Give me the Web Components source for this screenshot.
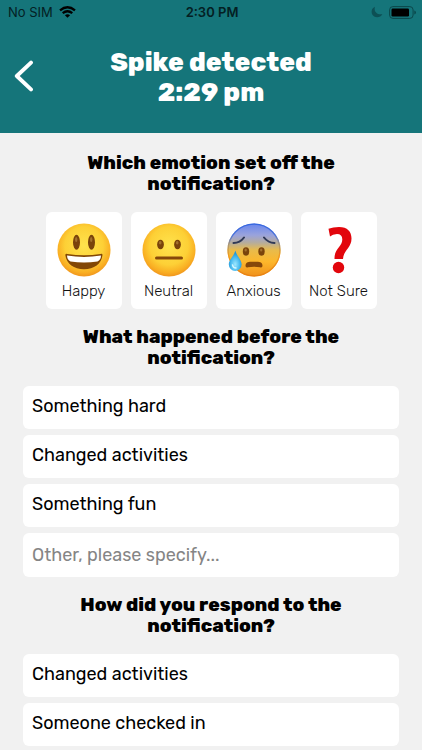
<!DOCTYPE html>
<html lang="en">
<head>
<meta charset="utf-8">
<meta name="viewport" content="width=device-width, initial-scale=1">
<title>Spike detected</title>
<style>
    body {
        margin: 0;
        background: #f1f1f1;
        color: #000;
        font-family: Rubik, Inter, "Liberation Sans", sans-serif;
    }
    main {
        padding: 19px 23px 4px;
    }
</style>
</head>
<body>

<template id="status-bar">
    <style>
        :host {
            display: grid;
            grid-template-columns: 1fr auto 1fr;
            align-items: center;
            height: 24px;
            padding: 0 6px 0 8px;
            background: #15757a;
            font-family: Inter, "Liberation Sans", sans-serif;
            font-size: 13px;
            line-height: 16px;
            color: #042023;
        }
        .left, .right {
            display: flex;
            align-items: center;
            gap: 6px;
        }
        .right {
            justify-content: flex-end;
        }
        .time {
            font-weight: 600;
        }
        svg {
            display: block;
        }
    </style>
    <div class="left">
        <slot name="carrier"></slot>
        <svg width="17" height="12" viewBox="0 0 17 12" fill="none" stroke="#000" stroke-width="2.3">
            <path d="M1 4.3 Q8.5 -1.9 16 4.3"/>
            <path d="M3.7 7.1 Q8.5 3.3 13.3 7.1"/>
            <path d="M8.5 11.8 L5.9 9.2 Q8.5 7.2 11.1 9.2 Z" fill="#000" stroke="none"/>
        </svg>
    </div>
    <div class="time"><slot></slot></div>
    <div class="right">
        <svg width="12" height="12" viewBox="0 0 12 12">
            <path d="M4 .8 C-.5 2.6 -.3 8.6 3.2 10.6 C6.300 12.300 10.200 10.900 11.300 8 C6.600 9.200 2.400 5.800 4 .8 Z" fill="#0d5055"/>
        </svg>
        <svg width="27" height="13" viewBox="0 0 27 13">
            <rect x=".6" y=".6" width="23.5" height="11.8" rx="3.3" fill="none" stroke="#0b474b"/>
            <rect x="2.5" y="2.5" width="17.5" height="8" rx="1.2" fill="#000"/>
            <path d="M25.3 4.5 Q27 5.2 27 6.5 Q27 7.8 25.3 8.5 Z" fill="#0b474b"/>
        </svg>
    </div>
</template>

<template id="page-header">
    <style>
        :host {
            display: grid;
            grid-template-columns: 48px 1fr 48px;
            align-items: center;
            padding: 24px 0 25px;
            background: #15757a;
            color: #fff;
        }
        button {
            display: flex;
            justify-content: center;
            align-items: center;
            height: 60px;
            padding: 0 0 4px;
            border: 0;
            background: none;
            color: inherit;
            cursor: pointer;
        }
        h1 {
            margin: 0;
            font-size: 26px;
            line-height: 30px;
            font-weight: 800;
            text-align: center;
        }
    </style>
    <button type="button" aria-label="Back">
        <svg width="20" height="32" viewBox="0 0 20 32" fill="none" stroke="currentColor" stroke-width="3.9" stroke-linecap="round" stroke-linejoin="round">
            <path d="M17 2.6 L2.8 16 L17 29.4"/>
        </svg>
    </button>
    <h1><slot></slot></h1>
</template>

<template id="question-block">
    <style>
        :host {
            display: block;
            margin-bottom: 17px;
        }
        h2 {
            margin: 0 32px 18px;
            font-size: 19px;
            line-height: 21px;
            font-weight: 800;
            text-align: center;
        }
        .answers {
            display: flex;
            flex-direction: column;
            gap: 6px;
        }
        :host([row]) .answers {
            flex-direction: row;
            justify-content: center;
            gap: 9px;
        }
    </style>
    <h2><slot name="title"></slot></h2>
    <div class="answers"><slot></slot></div>
</template>

<template id="emotion-card">
    <style>
        :host {
            display: block;
            flex: 0 1 76px;
        }
        button {
            display: flex;
            flex-direction: column;
            align-items: center;
            gap: 4px;
            width: 100%;
            height: 97px;
            padding: 11px 0 0;
            border: 0;
            border-radius: 6px;
            background: #fff;
            color: #111;
            font: inherit;
            font-size: 15px;
            line-height: 20px;
            font-weight: 300;
            white-space: nowrap;
            cursor: pointer;
        }
    </style>
    <button type="button">
        <slot name="icon"></slot>
        <span><slot></slot></span>
    </button>
</template>

<template id="answer-option">
    <style>
        :host {
            display: block;
        }
        button {
            display: block;
            width: 100%;
            padding: 9px 9px 12px;
            border: 0;
            border-radius: 6px;
            background: #fff;
            color: inherit;
            font: inherit;
            font-size: 18px;
            line-height: 22px;
            text-align: left;
            cursor: pointer;
        }
    </style>
    <button type="button"><slot></slot></button>
</template>

<template id="answer-input">
    <style>
        :host {
            display: block;
        }
        input {
            display: block;
            box-sizing: border-box;
            width: 100%;
            height: 44px;
            padding: 0 9px;
            border: 0;
            border-radius: 6px;
            background: #fff;
            color: inherit;
            font: inherit;
            font-size: 18px;
        }
        input::placeholder {
            color: #858585;
            opacity: 1;
        }
    </style>
    <input type="text">
</template>

<status-bar><span slot="carrier">No SIM</span>2:30 PM</status-bar>
<page-header>Spike detected<br>2:29 pm</page-header>

<main>
    <question-block row>
        <span slot="title">Which emotion set off the notification?</span>
        <emotion-card>
            <svg slot="icon" width="54" height="54" viewBox="0 0 54 54">
                <defs>
                    <radialGradient id="face" cx=".5" cy=".42" r=".6">
                        <stop offset="0" stop-color="#ffe34d"/>
                        <stop offset=".6" stop-color="#fdd036"/>
                        <stop offset=".85" stop-color="#f9ad22"/>
                        <stop offset="1" stop-color="#ee8f1c"/>
                    </radialGradient>
                </defs>
                <circle cx="27" cy="27" r="26.5" fill="url(#face)"/>
                <ellipse cx="19.5" cy="19.2" rx="3.5" ry="7.5" fill="#7a430b"/>
                <ellipse cx="34.5" cy="19.2" rx="3.5" ry="7.5" fill="#7a430b"/>
                <ellipse cx="19.2" cy="16.5" rx="1.2" ry="2.5" fill="#a2702f"/>
                <ellipse cx="34.2" cy="16.5" rx="1.2" ry="2.5" fill="#a2702f"/>
                <path d="M8.3 32 Q8.5 30.4 10.5 31 Q27 33.5 43.5 31 Q45.5 30.4 45.5 32 C44.5 41 37 46.2 27 46.2 C17 46.2 9.5 41 8.3 32 Z" fill="#824706"/>
                <path d="M10 32.6 Q27 35.4 44 32.6 Q43.8 37.4 40.5 38.4 Q27 40.4 13.5 38.4 Q10.3 37.4 10 32.6 Z" fill="#fff"/>
            </svg>
            Happy
        </emotion-card>
        <emotion-card>
            <svg slot="icon" width="54" height="54" viewBox="0 0 54 54">
                <circle cx="27" cy="27" r="26.5" fill="url(#face)"/>
                <ellipse cx="18.5" cy="21.5" rx="3.4" ry="4.8" fill="#7a430b"/>
                <ellipse cx="35.5" cy="21.5" rx="3.4" ry="4.8" fill="#7a430b"/>
                <ellipse cx="18.2" cy="19.8" rx="1.3" ry="1.7" fill="#a2702f"/>
                <ellipse cx="35.2" cy="19.8" rx="1.3" ry="1.7" fill="#a2702f"/>
                <rect x="13" y="33.5" width="28" height="3" rx="1.5" fill="#86480a"/>
            </svg>
            Neutral
        </emotion-card>
        <emotion-card>
            <svg slot="icon" width="54" height="54" viewBox="0 0 54 54">
                <defs>
                    <linearGradient id="cold" x1="0" y1="0" x2="0" y2="1">
                        <stop offset="0" stop-color="#6886ee"/>
                        <stop offset=".22" stop-color="#9aa3dc"/>
                        <stop offset=".36" stop-color="#b5ac9e"/>
                        <stop offset=".5" stop-color="#e8bb4c"/>
                        <stop offset=".72" stop-color="#fdb72b"/>
                        <stop offset="1" stop-color="#ef901c"/>
                    </linearGradient>
                    <linearGradient id="rim" x1="0" y1="0" x2="0" y2="1">
                        <stop offset="0" stop-color="#3667df"/>
                        <stop offset=".22" stop-color="#4c75da"/>
                        <stop offset=".42" stop-color="#b59a68"/>
                        <stop offset=".6" stop-color="#ef9a22"/>
                        <stop offset="1" stop-color="#e98212"/>
                    </linearGradient>
                    <radialGradient id="drop" cx=".5" cy=".68" r=".55">
                        <stop offset="0" stop-color="#9ce7ff"/>
                        <stop offset=".6" stop-color="#4dbdf0"/>
                        <stop offset="1" stop-color="#2196d8"/>
                    </radialGradient>
                </defs>
                <circle cx="27" cy="27" r="26.5" fill="url(#cold)"/>
                <circle cx="27" cy="27" r="25.9" fill="none" stroke="url(#rim)" stroke-width="1.3"/>
                <path d="M6.5 20 Q13 20 17 14.500 M37 14.500 Q41 19.800 47.500 20" fill="none" stroke="#303956" stroke-width="2" stroke-linecap="round"/>
                <ellipse cx="19" cy="28.5" rx="3.2" ry="4.2" fill="#7a430b"/>
                <ellipse cx="34.5" cy="28.5" rx="3.2" ry="4.2" fill="#7a430b"/>
                <ellipse cx="18.7" cy="27" rx="1.2" ry="1.5" fill="#a2702f"/>
                <ellipse cx="34.2" cy="27" rx="1.2" ry="1.5" fill="#a2702f"/>
                <path d="M18.500 42.800 C18.500 38.500 22.500 38.700 27 38.700 C31.500 38.700 35.500 38.500 35.500 42.800 Q35.500 45 33 44.300 Q27 43.200 21 44.300 Q18.500 45 18.500 42.800 Z" fill="#86480a"/>
                <path d="M8.300 27.500 C10 33.500 14.600 36.500 14.600 41.500 A6.400 6.400 0 0 1 1.800 41.500 C1.800 36.500 6.800 33.500 8.300 27.500 Z" fill="url(#drop)"/>
                <path d="M5.500 42 Q6 45 9 45" fill="none" stroke="#d3f6ff" stroke-width="1.5" stroke-linecap="round"/>
            </svg>
            Anxious
        </emotion-card>
        <emotion-card>
            <svg slot="icon" width="54" height="54" viewBox="0 0 54 54">
                <path d="M16.500 5.800 Q21 4 27 4 C35.500 4 39.500 8.500 39.500 15.500 C39.500 25 31.500 27 31 36 H22.500 C22.200 25.500 30.300 24 30.300 16.500 Q30.300 11 25 11 Q20.500 11 18 13.500 Z" fill="#e2060c"/>
                <circle cx="26.5" cy="44.5" r="5.7" fill="#e2060c"/>
            </svg>
            Not Sure
        </emotion-card>
    </question-block>

    <question-block>
        <span slot="title">What happened before the notification?</span>
        <answer-option>Something hard</answer-option>
        <answer-option>Changed activities</answer-option>
        <answer-option>Something fun</answer-option>
        <answer-input placeholder="Other, please specify..."></answer-input>
    </question-block>

    <question-block>
        <span slot="title">How did you respond to the notification?</span>
        <answer-option>Changed activities</answer-option>
        <answer-option>Someone checked in</answer-option>
    </question-block>
</main>

<script type="text/javascript">
class TemplateElement extends HTMLElement{
    constructor(){
        super();

        const template = document.getElementById(this.localName);
        this.attachShadow({mode: 'open'});
        this.shadowRoot.appendChild(template.content.cloneNode(true));
    }
}

class StatusBar extends TemplateElement{}
class QuestionBlock extends TemplateElement{}
class EmotionCard extends TemplateElement{}
class AnswerOption extends TemplateElement{}

class PageHeader extends TemplateElement{
    connectedCallback(){
        this.shadowRoot.querySelector('button').addEventListener('click', () => history.back());
    }
}

class AnswerInput extends TemplateElement{
    static get observedAttributes() {
        return [ 'placeholder' ]
    };

    attributeChangedCallback(name, oldValue, newValue){
        const input = this.shadowRoot.querySelector('input');
        input.placeholder = newValue || '';
        input.setAttribute('aria-label', newValue || 'Other');
    }
}

window.customElements.define("status-bar", StatusBar);
window.customElements.define("page-header", PageHeader);
window.customElements.define("question-block", QuestionBlock);
window.customElements.define("emotion-card", EmotionCard);
window.customElements.define("answer-option", AnswerOption);
window.customElements.define("answer-input", AnswerInput);
</script>
</body>
</html>
